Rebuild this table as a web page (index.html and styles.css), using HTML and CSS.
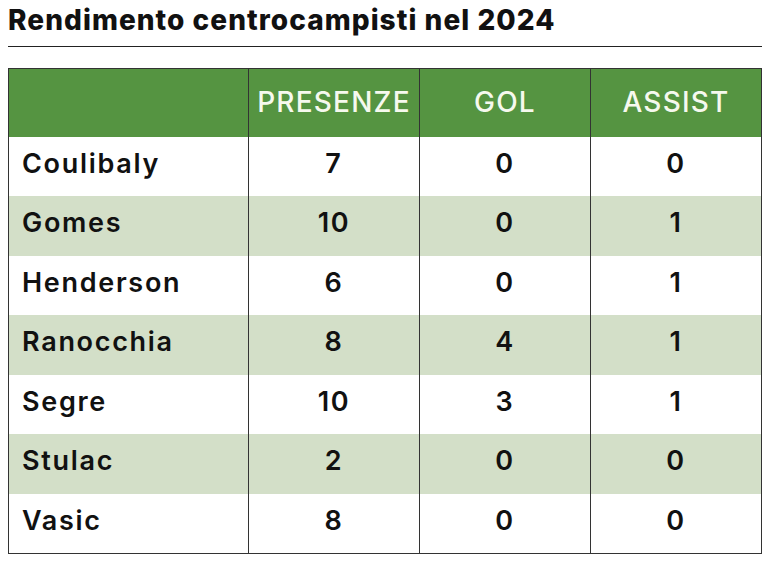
FILE: index.html
```html
<!DOCTYPE html>
<html lang="it">
<head>
<meta charset="utf-8">
<title>Rendimento centrocampisti nel 2024</title>
<link rel="stylesheet" href="styles.css">
</head>
<body>
<div class="page">
  <h1 class="title">Rendimento centrocampisti nel 2024</h1>
  <table class="stats">
    <thead>
      <tr><th class="name"></th><th>PRESENZE</th><th>GOL</th><th>ASSIST</th></tr>
    </thead>
    <tbody>
      <tr><td class="name">Coulibaly</td><td>7</td><td>0</td><td>0</td></tr>
      <tr><td class="name">Gomes</td><td>10</td><td>0</td><td>1</td></tr>
      <tr><td class="name">Henderson</td><td>6</td><td>0</td><td>1</td></tr>
      <tr><td class="name">Ranocchia</td><td>8</td><td>4</td><td>1</td></tr>
      <tr><td class="name">Segre</td><td>10</td><td>3</td><td>1</td></tr>
      <tr><td class="name">Stulac</td><td>2</td><td>0</td><td>0</td></tr>
      <tr><td class="name">Vasic</td><td>8</td><td>0</td><td>0</td></tr>
    </tbody>
  </table>
</div>
</body>
</html>
```
FILE: styles.css
```css
html, body {
  margin: 0;
  padding: 0;
  background: #ffffff;
}
.page {
  padding: 0 13px 0 8px;
  font-family: Inter, "Liberation Sans", sans-serif;
  color: #111111;
}
.title {
  margin: 0;
  padding: 3px 0 9px 0;
  font-size: 28px;
  line-height: 34px;
  font-weight: 800;
  letter-spacing: 1.05px;
  border-bottom: 1.5px solid #222;
}
.stats {
  margin-top: 21px;
  width: 754px;
  border-collapse: collapse;
  table-layout: fixed;
  border: 1px solid #333;
}
.stats th, .stats td {
  border-left: 1px solid #333;
  border-right: 1px solid #333;
  padding: 0;
  text-align: center;
  box-sizing: border-box;
}
.stats th {
  background: #559441;
  color: #f6f9ee;
  height: 68px;
  font-size: 28px;
  font-weight: 500;
  letter-spacing: 1.2px;
  padding-bottom: 2px;
}
.stats td {
  height: 59.5px;
  font-size: 27px;
  font-weight: 600;
  letter-spacing: 1.7px;
  padding-bottom: 6px;
}
.stats th.name, .stats td.name {
  width: 240px;
  text-align: left;
  padding-left: 13px;
}
.stats tbody tr:nth-child(even) td {
  background: #d3dfc8;
}
```
